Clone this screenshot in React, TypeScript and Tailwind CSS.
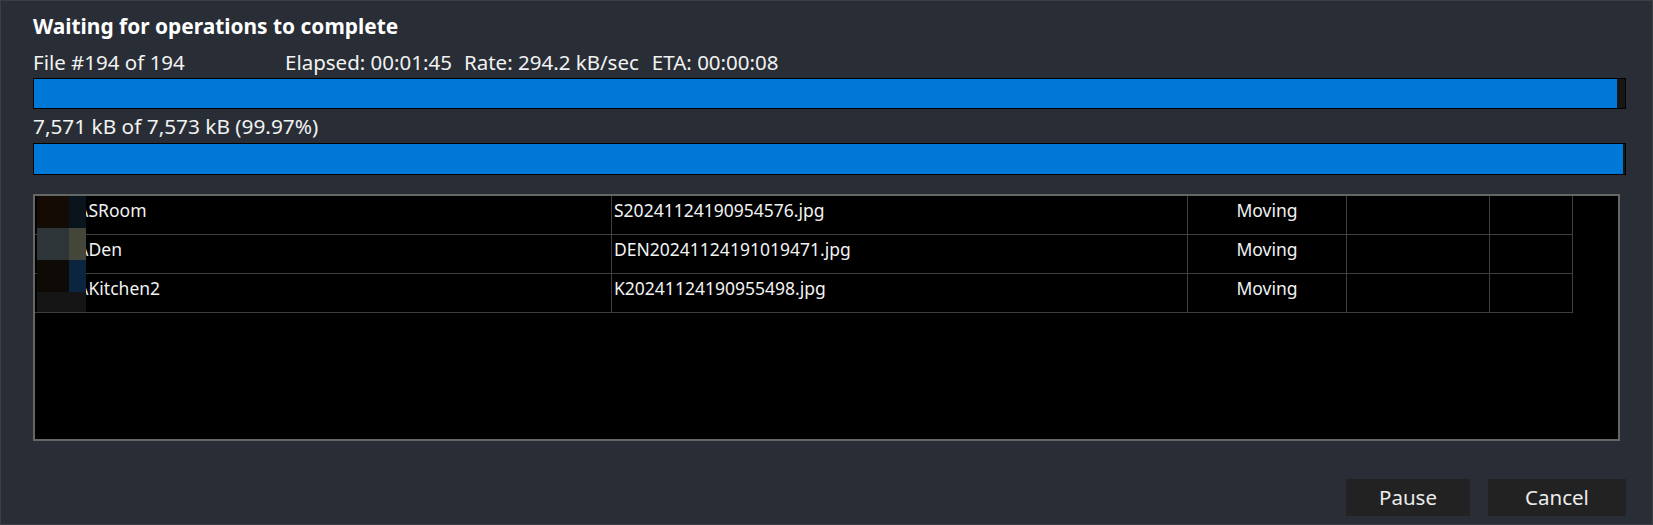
import React from "react";

const rows = [
  { path: "\\SRoom", file: "S20241124190954576.jpg", status: "Moving" },
  { path: "\\Den", file: "DEN20241124191019471.jpg", status: "Moving" },
  { path: "\\Kitchen2", file: "K20241124190955498.jpg", status: "Moving" },
];

// pixelated preview blocks covering the start of the path column
const mosaic = [
  ["bg-[#130b04]", "bg-[#0a141c]", "h-[32px]"],
  ["bg-[#2d3538]", "bg-[#45463a]", "h-[32px]"],
  ["bg-[#0e0a06]", "bg-[#0b2440]", "h-[32px]"],
  ["bg-[#151515]", "bg-[#151515]", "h-[20px]"],
];

function ProgressBar({ fill }: { fill: string }) {
  return (
    <div className="border border-black bg-[#161616] h-full">
      <div className={`h-full bg-[#0078d7] ${fill}`}></div>
    </div>
  );
}

export default function App() {
  return (
    <div
      className="w-[1653px] h-[525px] bg-[#292e36] border border-[#3b3f45] pl-[32px] pr-[26px] flex flex-col text-[#f2f2f2] overflow-hidden"
      style={{ fontFamily: '"Noto Sans", "Open Sans", sans-serif' }}
    >
      <div className="mt-[11px] h-[28px] leading-[28px] text-[20.9px] font-bold text-white whitespace-nowrap">
        Waiting for operations to complete
      </div>

      <div className="mt-[10px] h-[24px] leading-[24px] text-[20.5px] flex whitespace-nowrap">
        <span className="w-[252px]">File #194 of 194</span>
        <span>Elapsed: 00:01:45</span>
        <span className="ml-[12px]">Rate: 294.2 kB/sec</span>
        <span className="ml-[13px]">ETA: 00:00:08</span>
      </div>

      <div className="mt-[4px] h-[31px]">
        <ProgressBar fill="w-[1583px]" />
      </div>

      <div className="mt-[5px] h-[24px] leading-[24px] text-[20.8px] whitespace-nowrap">
        7,571 kB of 7,573 kB (99.97%)
      </div>

      <div className="mt-[5px] h-[32px]">
        <ProgressBar fill="w-[1589px]" />
      </div>

      <div className="mt-[19px] h-[247px] w-[1587px] border-2 border-[#666666] bg-black relative">
        <div className="w-[1538px] text-[17.5px] leading-[24px]">
          {rows.map((r) => (
            <div key={r.file} className="grid grid-cols-[577px_576px_159px_143px_83px] h-[39px] border-b border-[#3f3f3f]">
              <div className="border-r border-[#3f3f3f] pl-[47px] pt-[2px] whitespace-nowrap">{r.path}</div>
              <div className="border-r border-[#3f3f3f] pl-[2px] pt-[2px] whitespace-nowrap">{r.file}</div>
              <div className="border-r border-[#3f3f3f] pt-[2px] text-center">{r.status}</div>
              <div className="border-r border-[#3f3f3f]"></div>
              <div className="border-r border-[#3f3f3f]"></div>
            </div>
          ))}
        </div>

        <div className="absolute left-[2px] top-0 flex flex-col">
          {mosaic.map(([a, b, h], i) => (
            <div key={i} className={`flex ${h}`}>
              <div className={`w-[32px] ${a}`}></div>
              <div className={`w-[17px] ${b}`}></div>
            </div>
          ))}
        </div>
      </div>

      <div className="mt-[38px] flex justify-end gap-[18px] text-[20.5px]">
        <button className="w-[124px] h-[37px] bg-[#222222] text-[#ececec]">Pause</button>
        <button className="w-[138px] h-[37px] bg-[#222222] text-[#ececec]">Cancel</button>
      </div>
    </div>
  );
}
